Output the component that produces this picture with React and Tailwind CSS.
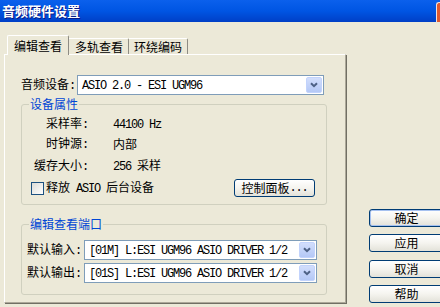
import React from "react";

const cn = "font-['Noto_Sans_CJK_SC','Noto_Sans',sans-serif]";

function M({ children }) {
  return (
    <span className="font-['Liberation_Mono','DejaVu_Sans_Mono',monospace] text-[12px] tracking-[-1.2px] whitespace-pre">
      {children}
    </span>
  );
}

function Arrow() {
  return (
    <div className="ml-auto mr-[1px] w-[16px] h-[16px] rounded-[2px] bg-linear-to-b from-[#D2DEFC] to-[#B4C8F6] border border-[#C2D3FC] flex items-center justify-center">
      <svg width="8" height="6" viewBox="0 0 8 6">
        <path d="M1 1.2 L4 4.2 L7 1.2" fill="none" stroke="#4D6185" strokeWidth="2" />
      </svg>
    </div>
  );
}

function Select({ width, text }) {
  return (
    <div className={`${width} h-[20px] border border-[#7F9DB9] bg-white flex items-center`}>
      <span className="pl-[4px] text-black">
        <M>{text}</M>
      </span>
      <Arrow />
    </div>
  );
}

function Group({ label, children, className }) {
  return (
    <fieldset className={`w-[306px] border border-[#D0D0BF] rounded-[3px] ${className}`}>
      <legend className="ml-[7px] px-[1px] text-[12px] leading-[14px] text-[#0046D5]">{label}</legend>
      {children}
    </fieldset>
  );
}

function Btn({ children, def, className = "" }) {
  return (
    <div
      className={`h-[18px] border border-[#003C74] rounded-[3px] bg-linear-to-b from-[#FFFFFF] via-[#F5F4EF] to-[#E3E2D9] flex items-center justify-center text-[12px] leading-[14px] ${
        def ? "shadow-[inset_0_0_0_1px_#A6C1F0]" : ""
      } ${className}`}
    >
      {children}
    </div>
  );
}

function Row({ label, children, className = "" }) {
  return (
    <div className={`h-[20px] flex items-center ${className}`}>
      <div className="w-[57px] text-right">
        {label}
        <M>:</M>
      </div>
      <div className="ml-[25px]">{children}</div>
    </div>
  );
}

export default function App() {
  return (
    <div className={`w-[440px] h-[307px] bg-[#ECE9D8] overflow-hidden flex flex-col text-black ${cn}`}>
      {/* Title bar */}
      <div className="h-[22px] shrink-0 flex items-center bg-linear-to-b from-[#0B60EC] via-[#0055E3] to-[#003FC6]">
        <span className="pl-[2px] text-[13px] leading-[16px] font-bold text-white [text-shadow:1px_1px_0_#0A1883]">
          音频硬件设置
        </span>
        <div className="ml-auto w-[4px] h-[20px] mt-[1px] bg-[#E0592F] border-l border-t border-[#F1E2DC] rounded-tl-[3px]" />
      </div>

      <div className="flex items-start">
        {/* Left: tab control */}
        <div className="ml-[4px] w-[343px] flex flex-col">
          <div className="mt-[13px] h-[20px] flex items-start pl-[3px] text-[12px] leading-[14px]">
            <div className="relative z-10 w-[62px] h-[20px] bg-[#ECE9D8] border-t border-l border-r border-t-white border-l-white border-r-[#8E8C84] rounded-t-[2px] pl-[6px] pt-[3px]">
              编辑查看
            </div>
            <div className="mt-[3px] w-[60px] h-[16px] border-t border-r border-t-white border-r-[#8E8C84] rounded-tr-[2px] pl-[6px] pt-[1px]">
              多轨查看
            </div>
            <div className="mt-[3px] w-[59px] h-[16px] border-t border-r border-t-white border-r-[#8E8C84] rounded-tr-[2px] pl-[5px] pt-[1px]">
              环绕编码
            </div>
          </div>

          <div className="-mt-[1px] w-[342px] h-[249px] border border-t-white border-l-white border-r-[#ACA899] border-b-[#ACA899] shadow-[1px_1px_0_#716F64] pl-[16px] pt-[20px] text-[12px] leading-[14px]">
            <div className="h-[20px] flex items-center">
              <div className="w-[56px]">
                音频设备<M>:</M>
              </div>
              <Select width="w-[247px]" text="ASIO 2.0 - ESI UGM96" />
            </div>

            <Group label="设备属性" className="mt-[2px]">
              <div className="pl-[9px] pr-[11px] pb-[7px] flex flex-col">
                <Row label="采样率" className="mt-[3px]">
                  <M>44100 Hz</M>
                </Row>
                <Row label="时钟源">内部</Row>
                <Row label="缓存大小" className="mt-[2px]">
                  <M>256 </M>采样
                </Row>
                <div className="mt-[3px] h-[18px] flex items-center">
                  <div className="w-[13px] h-[13px] border border-[#1C5180] bg-linear-to-br from-[#DCDCD7] to-white" />
                  <div className="ml-[2px]">
                    释放<M> ASIO </M>后台设备
                  </div>
                  <Btn className="ml-auto w-[81px]">
                    控制面板<M>...</M>
                  </Btn>
                </div>
              </div>
            </Group>

            <Group label="编辑查看端口" className="mt-[12px]">
              <div className="pl-[5px] pb-[11px] flex flex-col">
                <div className="mt-[9px] h-[20px] flex items-center">
                  <div className="w-[57px]">
                    默认输入<M>:</M>
                  </div>
                  <Select width="w-[233px]" text="[01M] L:ESI UGM96 ASIO DRIVER 1/2" />
                </div>
                <div className="mt-[3px] h-[20px] flex items-center">
                  <div className="w-[57px]">
                    默认输出<M>:</M>
                  </div>
                  <Select width="w-[233px]" text="[01S] L:ESI UGM96 ASIO DRIVER 1/2" />
                </div>
              </div>
            </Group>
          </div>
        </div>

        {/* Right: dialog buttons */}
        <div className="ml-[23px] mt-[187px] w-[75px] shrink-0 flex flex-col gap-[7px]">
          <Btn def>确定</Btn>
          <Btn>应用</Btn>
          <Btn className="mt-[1px]">取消</Btn>
          <Btn>帮助</Btn>
        </div>
      </div>
    </div>
  );
}
